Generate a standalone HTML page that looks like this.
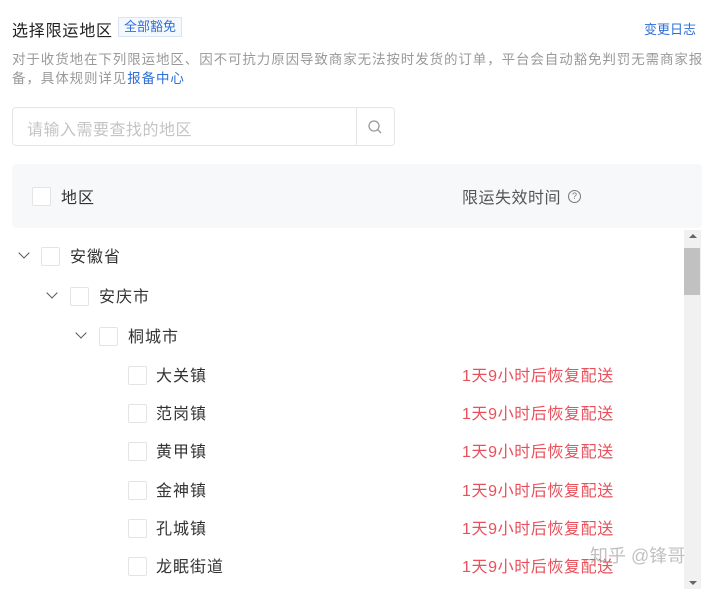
<!DOCTYPE html>
<html><head><meta charset="utf-8"><style>
*{margin:0;padding:0;box-sizing:border-box}
body{width:720px;height:589px;background:#fff;font-family:"Liberation Sans","Noto Sans CJK SC",sans-serif;position:relative;overflow:hidden;color:#333}
.a{position:absolute;white-space:nowrap}
.cb{position:absolute;width:19px;height:19px;border:1px solid #e3e4e6;border-radius:2px;background:#fff}
.row{font-size:16px;color:#333;letter-spacing:1px}
.red{font-size:16px;color:#e8505b;letter-spacing:0.6px}
.arr{position:absolute;width:8px;height:8px;border-right:1.5px solid #555;border-bottom:1.5px solid #555;transform:rotate(45deg)}
</style></head><body>
<div class="a" style="left:12px;top:17px;font-size:16px;color:#222;letter-spacing:0.8px">选择限运地区</div>
<div class="a" style="left:118px;top:17px;height:20px;padding:0 5px;border:1px solid #d6e4f5;background:#f5f9fe;color:#2f6fd6;font-size:13px;line-height:18px">全部豁免</div>
<div class="a" style="left:644px;top:19px;font-size:13px;color:#2f6fd6">变更日志</div>
<div class="a" style="left:12px;top:50px;font-size:13.5px;color:#999;line-height:19px;letter-spacing:0.9px">对于收货地在下列限运地区、因不可抗力原因导致商家无法按时发货的订单，平台会自动豁免判罚无需商家报<br>备，具体规则详见<span style="color:#2f6fd6">报备中心</span></div>
<div class="a" style="left:12px;top:107px;width:383px;height:39px;border:1px solid #e5e6e8;border-radius:4px"></div>
<div class="a" style="left:356px;top:108px;width:1px;height:37px;background:#e5e6e8"></div>
<div class="a" style="left:27px;top:116px;font-size:16px;color:#c4c4c4;letter-spacing:0.5px">请输入需要查找的地区</div>
<svg class="a" style="left:367px;top:119px" width="16" height="16" viewBox="0 0 16 16"><circle cx="7" cy="7" r="5" fill="none" stroke="#999" stroke-width="1.3"/><path d="M10.6 10.6L14 14" stroke="#999" stroke-width="1.3"/></svg>
<div class="a" style="left:12px;top:164px;width:690px;height:64px;background:#f7f8fa;border-radius:4px"></div>
<div class="cb" style="left:32px;top:187px"></div>
<div class="a row" style="left:61px;top:184px">地区</div>
<div class="a row" style="left:462px;top:184px;color:#555;letter-spacing:0.5px">限运失效时间</div>
<div class="a" style="left:568px;top:190px;width:13px;height:13px;border:1px solid #777;border-radius:50%;font-size:9px;line-height:11px;text-align:center;color:#777">?</div>
<div class="a" style="left:684px;top:230px;width:17px;height:359px;background:#f1f1f1"></div>
<div class="a" style="left:684px;top:248px;width:16px;height:47px;background:#c1c1c1"></div>
<div class="a" style="left:689px;top:234px;border:4px solid transparent;border-bottom:4px solid #666;border-top:0"></div>
<div class="a" style="left:689px;top:581px;border:4px solid transparent;border-top:4px solid #666;border-bottom:0"></div>
<div class="arr" style="left:20px;top:249px"></div><div class="cb" style="left:41px;top:247px"></div><div class="a row" style="left:70px;top:243px">安徽省</div>
<div class="arr" style="left:48px;top:289px"></div><div class="cb" style="left:70px;top:287px"></div><div class="a row" style="left:99px;top:283px">安庆市</div>
<div class="arr" style="left:77px;top:329px"></div><div class="cb" style="left:99px;top:327px"></div><div class="a row" style="left:128px;top:323px">桐城市</div>
<div class="cb" style="left:128px;top:366px"></div><div class="a row" style="left:156px;top:362px">大关镇</div><div class="a red" style="left:462px;top:362px">1天9小时后恢复配送</div>
<div class="cb" style="left:128px;top:404px"></div><div class="a row" style="left:156px;top:400px">范岗镇</div><div class="a red" style="left:462px;top:400px">1天9小时后恢复配送</div>
<div class="cb" style="left:128px;top:442px"></div><div class="a row" style="left:156px;top:438px">黄甲镇</div><div class="a red" style="left:462px;top:438px">1天9小时后恢复配送</div>
<div class="cb" style="left:128px;top:481px"></div><div class="a row" style="left:156px;top:477px">金神镇</div><div class="a red" style="left:462px;top:477px">1天9小时后恢复配送</div>
<div class="cb" style="left:128px;top:519px"></div><div class="a row" style="left:156px;top:515px">孔城镇</div><div class="a red" style="left:462px;top:515px">1天9小时后恢复配送</div>
<div class="cb" style="left:128px;top:557px"></div><div class="a row" style="left:156px;top:553px">龙眠街道</div><div class="a red" style="left:462px;top:553px">1天9小时后恢复配送</div>
<div class="a" style="left:590px;top:542px;font-size:18px;color:rgba(150,150,150,0.6)">知乎 @锋哥</div>
</body></html>
